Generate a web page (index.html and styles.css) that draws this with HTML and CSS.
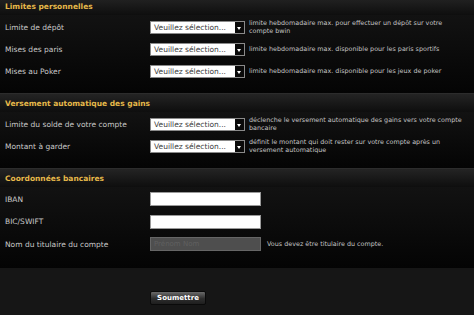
FILE: index.html
```html
<!DOCTYPE html>
<html lang="fr">
<head>
    <meta charset="UTF-8">
    <meta name="viewport" content="width=device-width, initial-scale=1.0">
    <title>Limites personnelles</title>
    <link rel="stylesheet" href="styles.css">
</head>
<body>
    <form class="limits-form">
        <div class="section section-first">
            <h2 class="section-title">Limites personnelles</h2>
            <div class="section-body">
                <div class="row">
                    <label class="row-label">Limite de dépôt</label>
                    <div class="fake-select"><span>Veuillez sélection...</span><i class="arrow"></i></div>
                    <p class="hint">limite hebdomadaire max. pour effectuer un dépôt sur votre<br>compte bwin</p>
                </div>
                <div class="row">
                    <label class="row-label">Mises des paris</label>
                    <div class="fake-select"><span>Veuillez sélection...</span><i class="arrow"></i></div>
                    <p class="hint">limite hebdomadaire max. disponible pour les paris sportifs</p>
                </div>
                <div class="row">
                    <label class="row-label">Mises au Poker</label>
                    <div class="fake-select"><span>Veuillez sélection...</span><i class="arrow"></i></div>
                    <p class="hint">limite hebdomadaire max. disponible pour les jeux de poker</p>
                </div>
            </div>
        </div>

        <div class="section">
            <h2 class="section-title">Versement automatique des gains</h2>
            <div class="section-body">
                <div class="row">
                    <label class="row-label">Limite du solde de votre compte</label>
                    <div class="fake-select"><span>Veuillez sélection...</span><i class="arrow"></i></div>
                    <p class="hint">déclenche le versement automatique des gains vers votre compte bancaire</p>
                </div>
                <div class="row">
                    <label class="row-label">Montant à garder</label>
                    <div class="fake-select"><span>Veuillez sélection...</span><i class="arrow"></i></div>
                    <p class="hint">définit le montant qui doit rester sur votre compte après un versement automatique</p>
                </div>
            </div>
        </div>

        <div class="section">
            <h2 class="section-title">Coordonnées bancaires</h2>
            <div class="section-body section-bank">
                <div class="row">
                    <label class="row-label" for="iban">IBAN</label>
                    <input class="text-input" type="text" id="iban">
                </div>
                <div class="row">
                    <label class="row-label" for="bic">BIC/SWIFT</label>
                    <input class="text-input" type="text" id="bic">
                </div>
                <div class="row">
                    <label class="row-label" for="holder">Nom du titulaire du compte</label>
                    <input class="text-input text-input-disabled" type="text" id="holder" value="Prénom Nom" disabled>
                    <p class="hint hint-note">Vous devez être titulaire du compte.</p>
                </div>
            </div>
        </div>

        <div class="form-footer">
            <button type="submit" class="submit-btn">Soumettre</button>
        </div>
    </form>
</body>
</html>
```

FILE: styles.css
```css
body {
    margin: 0;
    background-color: #161616;
    font-family: "DejaVu Sans", Verdana, sans-serif;
    overflow: hidden;
}
.limits-form {
    width: 474px;
}
.section-title {
    margin: 0;
    height: 19px;
    line-height: 19px;
    padding-left: 5px;
    font-size: 7.5px;
    font-weight: bold;
    color: #e6b84a;
    background: linear-gradient(#242424, #0e0e0e);
    border-top: 1px solid #2c2c2c;
    box-sizing: border-box;
}
.section-first {
    margin-top: -4px;
}
.section-body {
    padding: 1px 0 11px;
    background: linear-gradient(#121212, #040404);
}
.section-bank {
    padding-top: 1px;
    padding-bottom: 12px;
}
.row {
    display: flex;
    align-items: center;
    min-height: 22px;
}
.section-bank .row {
    min-height: 22.5px;
}
.row-label {
    flex: none;
    width: 145px;
    padding-left: 5px;
    font-size: 7.5px;
    color: #c9c9c9;
}
.fake-select {
    flex: none;
    display: flex;
    width: 95px;
    height: 13px;
    border: 1px solid #8a8a8a;
    box-sizing: border-box;
    background-color: #fff;
}
.fake-select span {
    flex: 1;
    padding-left: 3px;
    font-size: 7.5px;
    line-height: 11px;
    color: #3a3a3a;
    white-space: nowrap;
    overflow: hidden;
}
.arrow {
    width: 9px;
    background-color: #0a0a0a;
    position: relative;
}
.arrow::after {
    content: "";
    position: absolute;
    left: 2px;
    top: 5px;
    border-left: 2.5px solid transparent;
    border-right: 2.5px solid transparent;
    border-top: 3px solid #fff;
}
.hint {
    margin: 0 0 0 4px;
    width: 215px;
    font-size: 6.4px;
    line-height: 8px;
    color: #c4c4c4;
}
.hint-note {
    width: auto;
    margin-left: 6px;
    white-space: nowrap;
}
.text-input {
    flex: none;
    width: 111px;
    height: 14px;
    padding: 0 3px;
    margin: 0;
    border: 1px solid #9a9a9a;
    box-sizing: border-box;
    background-color: #fff;
    font-family: inherit;
    font-size: 7px;
}
.text-input-disabled {
    background-color: #4e4e4e;
    border-color: #666;
    color: #606060;
}
.form-footer {
    height: 47px;
    padding: 17px 0 0 150px;
    box-sizing: border-box;
    background-color: #161616;
}
.submit-btn {
    width: 56px;
    height: 14px;
    padding: 0;
    border: 1px solid #0a0a0a;
    border-radius: 2px;
    background: linear-gradient(#6a6a6a, #2e2e2e 55%, #1e1e1e);
    color: #fff;
    font-family: inherit;
    font-size: 7px;
    font-weight: bold;
}
```
